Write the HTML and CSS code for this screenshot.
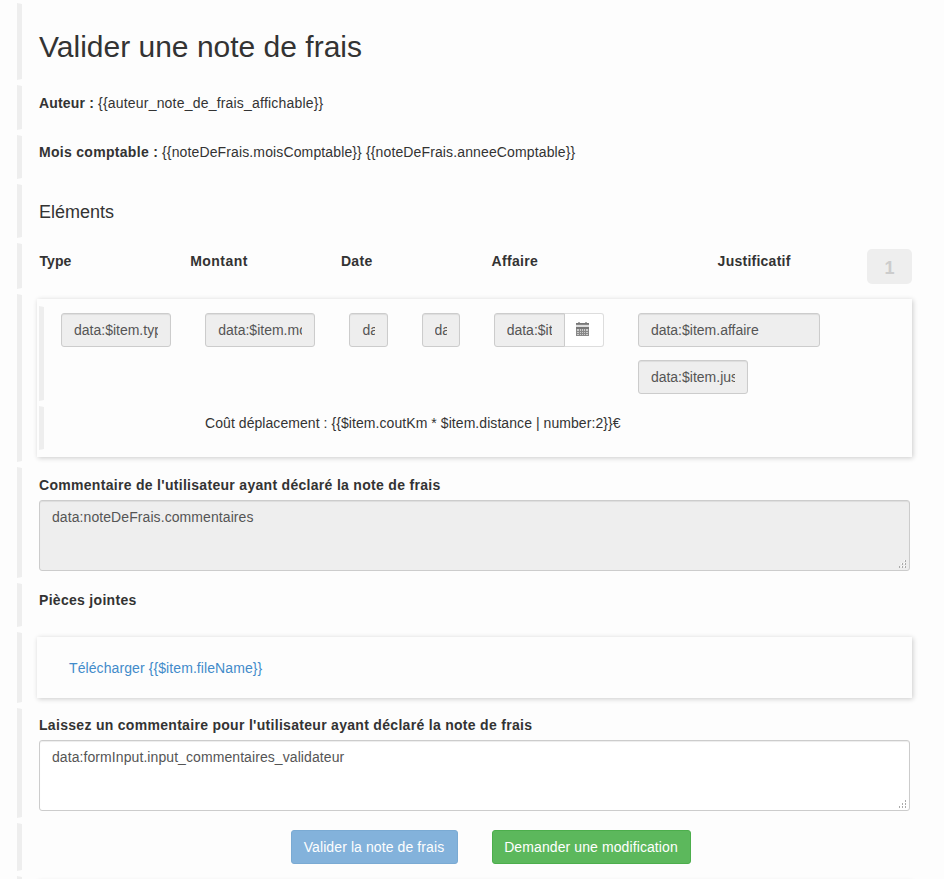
FILE: index.html
```html
<!DOCTYPE html>
<html lang="fr">
<head>
<meta charset="utf-8">
<title>Valider une note de frais</title>
<link rel="stylesheet" href="styles.css">
</head>
<body>
<main class="form">
  <section class="row row-title"><h1>Valider une note de frais</h1></section>
  <section class="row row-author"><p><b class="label-author">Auteur :</b> <span class="value-author">{{auteur_note_de_frais_affichable}}</span></p></section>
  <section class="row row-month"><p><b class="label-month">Mois comptable :</b> <span class="value-month">{{noteDeFrais.moisComptable}} {{noteDeFrais.anneeComptable}}</span></p></section>
  <section class="row row-elements"><h4>Eléments</h4></section>
  <section class="row row-head">
    <b class="span-2 type">Type</b><b class="span-2 amount">Montant</b><b class="span-2">Date</b><b class="span-3">Affaire</b><b class="span-2 proof">Justificatif</b>
    <span class="count">1</span>
  </section>
  <section class="row row-items">
    <div class="card items">
      <div class="row inner-fields">
        <input class="control span-2" readonly value="data:$item.type">
        <input class="control span-2" readonly value="data:$item.montant">
        <input class="control" readonly value="data:$item.depart">
        <input class="control" readonly value="data:$item.arrivee">
        <div class="group span-2">
          <input class="control" readonly value="data:$item.date">
          <button class="calendar" type="button" aria-label="Date">
            <svg width="13" height="14" viewBox="0 0 13 14" shape-rendering="crispEdges"><path fill="#aaa" d="M2 0h2v1H2zM9 0h2v1H9z"/><path fill="#777" d="M0 1h13v1H0zM0 5h13v2H0z"/><path fill="#888" d="M0 2h13v1H0zM0 7h13v7H0z"/><path fill="#ddd" d="M0 3h13v2H0z"/><path fill="#ccc" d="M1 7h2v2H1zM4 7h1v2H4zM6 7h1v2H6zM8 7h1v2H8zM10 7h2v2h-2zM1 10h2v1H1zM4 10h1v1H4zM6 10h1v1H6zM8 10h1v1H8zM10 10h2v1h-2zM1 12h2v1H1zM4 12h1v1H4zM6 12h1v1H6zM8 12h1v1H8zM10 12h2v1h-2z"/></svg>
          </button>
        </div>
        <input class="control span-3" readonly value="data:$item.affaire">
        <input class="control attachment" readonly value="data:$item.justificatif">
      </div>
      <div class="row inner-cost"><p>Coût déplacement : {{$item.coutKm * $item.distance | number:2}}€</p></div>
    </div>
  </section>
  <section class="row row-comment">
    <label>Commentaire de l'utilisateur ayant déclaré la note de frais</label>
    <div class="area disabled"><span>data:noteDeFrais.commentaires</span>
      <svg class="grip" width="8" height="8" viewBox="0 0 8 8" shape-rendering="crispEdges"><path fill="#fff" d="M5 0h1v1H5zM2 3h1v1H2zM5 3h1v1H5zM2 6h1v1H2zM5 6h1v1H5z"/><path fill="#aaa" d="M6 0h1v2H6zM3 3h1v2H3zM6 3h1v2H6zM0 6h1v2H0zM3 6h1v2H3zM6 6h1v2H6z"/></svg>
    </div>
  </section>
  <section class="row row-files"><b>Pièces jointes</b></section>
  <section class="row row-download"><div class="card download"><a href="#">Télécharger {{$item.fileName}}</a></div></section>
  <section class="row row-reply">
    <label>Laissez un commentaire pour l'utilisateur ayant déclaré la note de frais</label>
    <div class="area"><span>data:formInput.input_commentaires_validateur</span>
      <svg class="grip" width="8" height="8" viewBox="0 0 8 8" shape-rendering="crispEdges"><path fill="#aaa" d="M6 0h1v2H6zM3 3h1v2H3zM6 3h1v2H6zM0 6h1v2H0zM3 6h1v2H3zM6 6h1v2H6z"/></svg>
    </div>
  </section>
  <section class="row row-actions">
    <button class="btn primary" type="button" disabled>Valider la note de frais</button>
    <button class="btn success" type="button">Demander une modification</button>
  </section>
  <section class="row row-last"><div class="card"></div></section>
</main>
</body>
</html>
```

FILE: styles.css
```css
* { box-sizing: border-box; }
html { overflow: hidden; }
body {
  margin: 0;
  height: 879px;
  overflow: hidden;
  background: #fdfdfd;
  color: #333;
  font: 14px/20px "Liberation Sans", Arial, sans-serif;
}
p, h1, h4 { margin: 0; }
h1 { font-size: 30px; line-height: 33px; font-weight: 400; }
h4 { font-size: 18px; line-height: 20px; font-weight: 400; }
b, label { letter-spacing: .3px; }
label { display: block; font-weight: 700; }

.form {
  display: flex;
  flex-direction: column;
  gap: 5px;
  padding: 3px 17px 0 17px;
}
.row {
  flex: none;
  border: 1px solid transparent;
  border-left: 5px solid #eee;
  padding: 0 16px 0 17px;
}
.row-title { height: 77px; padding-top: 26px; }
.row-author { height: 45px; padding-top: 7px; }
.row-month { height: 44px; padding-top: 6px; }
.label-author { letter-spacing: .18px; }
.value-author { letter-spacing: .2px; }
.value-month { letter-spacing: .13px; }
.row-elements { height: 54px; padding-top: 17px; }
.row-head {
  height: 46px;
  padding: 7px 0 0;
  display: grid;
  grid-template-columns: repeat(12, 1fr);
}
.row-head b { padding-left: 17.6px; }
.row-head .type { letter-spacing: 0; }
.row-head .amount { letter-spacing: .45px; }
.row-head .proof { letter-spacing: .25px; }
.span-2 { grid-column: span 2; }
.span-3 { grid-column: span 3; }
.count {
  justify-self: end;
  width: 45px;
  height: 35px;
  margin: -2px 14px 0 0;
  border-radius: 5px;
  background: #eee;
  color: #ccc;
  font-size: 18px;
  font-weight: 700;
  line-height: 39px;
  text-align: center;
}
.row-items { height: 168px; padding: 4px 14px 0 15px; }
.card {
  background: #fdfdfd;
  box-shadow: 1px 1px 5px rgba(0, 0, 0, .2);
}
.items {
  height: 158px;
  padding: 7px 4px 0 2px;
  display: flex;
  flex-direction: column;
  gap: 5px;
}
.inner-fields {
  height: 95px;
  padding: 6px 0 0 17px;
  display: grid;
  grid-template-columns: repeat(12, 38.11px);
  grid-auto-rows: 34px;
  gap: 13px 34px;
}
.inner-cost { height: 44px; padding: 6px 0 0 161px; letter-spacing: .065px; }
.control {
  width: 100%;
  min-width: 0;
  height: 34px;
  padding: 6px 12px;
  border: 1px solid #ccc;
  border-radius: 3px;
  background: #eee;
  box-shadow: inset 0 1px 1px rgba(0, 0, 0, .075);
  color: #555;
  font: inherit;
  outline: 0;
}
.attachment { grid-column: 9 / span 2; }
.group { display: flex; }
.group .control { flex: 1; border-radius: 3px 0 0 3px; }
.calendar {
  flex: none;
  width: 40px;
  height: 34px;
  margin-left: -1px;
  padding: 0 2px 2px 0;
  display: flex;
  align-items: center;
  justify-content: center;
  border: 1px solid #ddd;
  border-left-color: #ccc;
  border-radius: 0 3px 3px 0;
  background: #fff;
}
.row-comment { height: 111px; padding-top: 7px; }
.row-reply { height: 110px; padding-top: 6px; }
.area {
  position: relative;
  height: 71px;
  margin-top: 5px;
  padding: 6px 12px;
  border: 1px solid #ccc;
  border-radius: 3px;
  background: #fff;
  box-shadow: inset 0 1px 1px rgba(0, 0, 0, .075);
  color: #555;
  letter-spacing: .08px;
}
.disabled { background: #eee; }
.grip { position: absolute; right: 2px; bottom: 2px; }
.row-files { height: 44px; padding-top: 6px; }
.row-download { height: 71px; padding: 4px 14px 0 15px; }
.download { height: 61px; padding: 21px 0 0 32px; letter-spacing: .09px; }
a { color: #428bca; text-decoration: none; }
.row-actions {
  height: 48px;
  padding: 6px 0 0 1px;
  display: grid;
  grid-template-columns: 1fr 1fr;
  column-gap: 34px;
}
.btn {
  height: 34px;
  padding: 6px 0;
  border: 1px solid;
  border-radius: 3px;
  color: #fff;
  font: inherit;
  letter-spacing: .1px;
  white-space: nowrap;
}
.primary { width: 167px; justify-self: end; background: #428bca; border-color: #357ebd; opacity: .65; }
.success { width: 199px; background: #5cb85c; border-color: #4cae4c; }
.row-last { height: 40px; padding: 4px 14px 0 15px; }
.row-last .card { height: 30px; }
```
